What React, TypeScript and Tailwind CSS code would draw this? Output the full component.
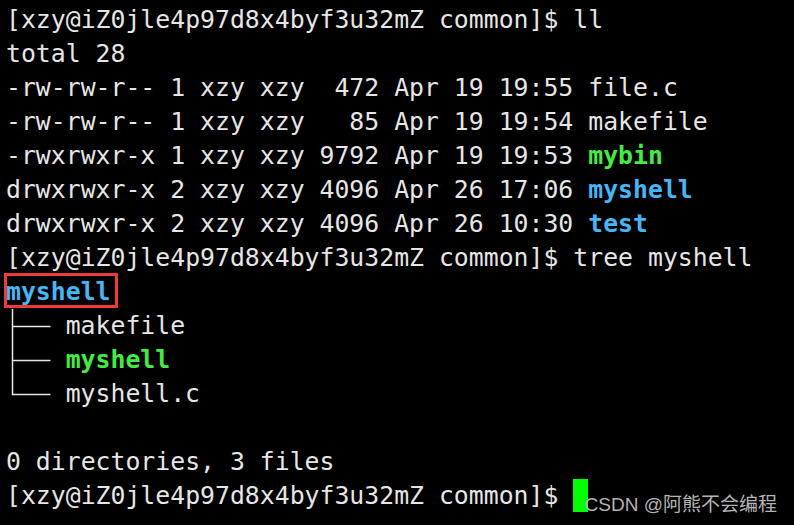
import React from 'react';

const PROMPT = '[xzy@iZ0jle4p97d8x4byf3u32mZ common]$ ';

type Entry = { meta: string; name: string; kind?: 'exe' | 'dir' };

const listing: Entry[] = [
  { meta: '-rw-rw-r-- 1 xzy xzy  472 Apr 19 19:55 ', name: 'file.c' },
  { meta: '-rw-rw-r-- 1 xzy xzy   85 Apr 19 19:54 ', name: 'makefile' },
  { meta: '-rwxrwxr-x 1 xzy xzy 9792 Apr 19 19:53 ', name: 'mybin', kind: 'exe' },
  { meta: 'drwxrwxr-x 2 xzy xzy 4096 Apr 26 17:06 ', name: 'myshell', kind: 'dir' },
  { meta: 'drwxrwxr-x 2 xzy xzy 4096 Apr 26 10:30 ', name: 'test', kind: 'dir' },
];

const tree: Entry[] = [
  { meta: '', name: 'makefile' },
  { meta: '', name: 'myshell', kind: 'exe' },
  { meta: '', name: 'myshell.c' },
];

const nameClass = (kind?: 'exe' | 'dir') =>
  kind === 'exe'
    ? 'font-bold text-[#43ec43]'
    : kind === 'dir'
      ? 'font-bold text-[#45b6f7]'
      : '';

const Line = ({ children }: { children?: React.ReactNode }) => (
  <div className="h-[34px] leading-[34px] whitespace-pre">{children}</div>
);

// tree connector (├── / └──), drawn thin like the terminal does
const Branch = ({ last }: { last: boolean }) => (
  <svg width="59.7" height="34" className="inline-block align-top" viewBox="0 0 59.7 34">
    <path
      d={last ? 'M6.5 0 V17.5 H44.5' : 'M6.5 0 V34 M6.5 17.5 H44.5'}
      stroke="#e6e6e6"
      strokeWidth="1.5"
      fill="none"
    />
  </svg>
);

export default function App() {
  return (
    <div
      className="relative w-[794px] h-[525px] overflow-hidden bg-black text-[#e6e6e6] text-[24.8px] pl-[6px] pt-[3px]"
      style={{ fontFamily: '"DejaVu Sans Mono", "Liberation Mono", monospace' }}
    >
      <Line>{PROMPT}ll</Line>
      <Line>total 28</Line>
      {listing.map((e) => (
        <Line key={e.name}>
          {e.meta}
          <span className={nameClass(e.kind)}>{e.name}</span>
        </Line>
      ))}
      <Line>{PROMPT}tree myshell</Line>
      <Line>
        <span className="relative font-bold text-[#45b6f7]">
          myshell
          <span className="absolute left-[-2px] right-[-7px] top-[-4px] bottom-[-2px] border-[3px] border-[#f03a3a]" />
        </span>
      </Line>
      {tree.map((e, i) => (
        <Line key={e.name}>
          <Branch last={i === tree.length - 1} />
          <span className={nameClass(e.kind)}>{e.name}</span>
        </Line>
      ))}
      <Line />
      <Line>0 directories, 3 files</Line>
      <Line>
        {PROMPT}
        <span className="inline-block w-[15px] h-[33px] align-top bg-[#00ff00]" />
      </Line>

      {/* watermark */}
      <div
        className="absolute right-[17px] bottom-[8px] text-[19px] leading-[24px] text-[#b4b4b4]"
        style={{ fontFamily: '"Liberation Sans", "Noto Sans CJK SC", sans-serif' }}
      >
        CSDN @阿熊不会编程
      </div>
    </div>
  );
}
